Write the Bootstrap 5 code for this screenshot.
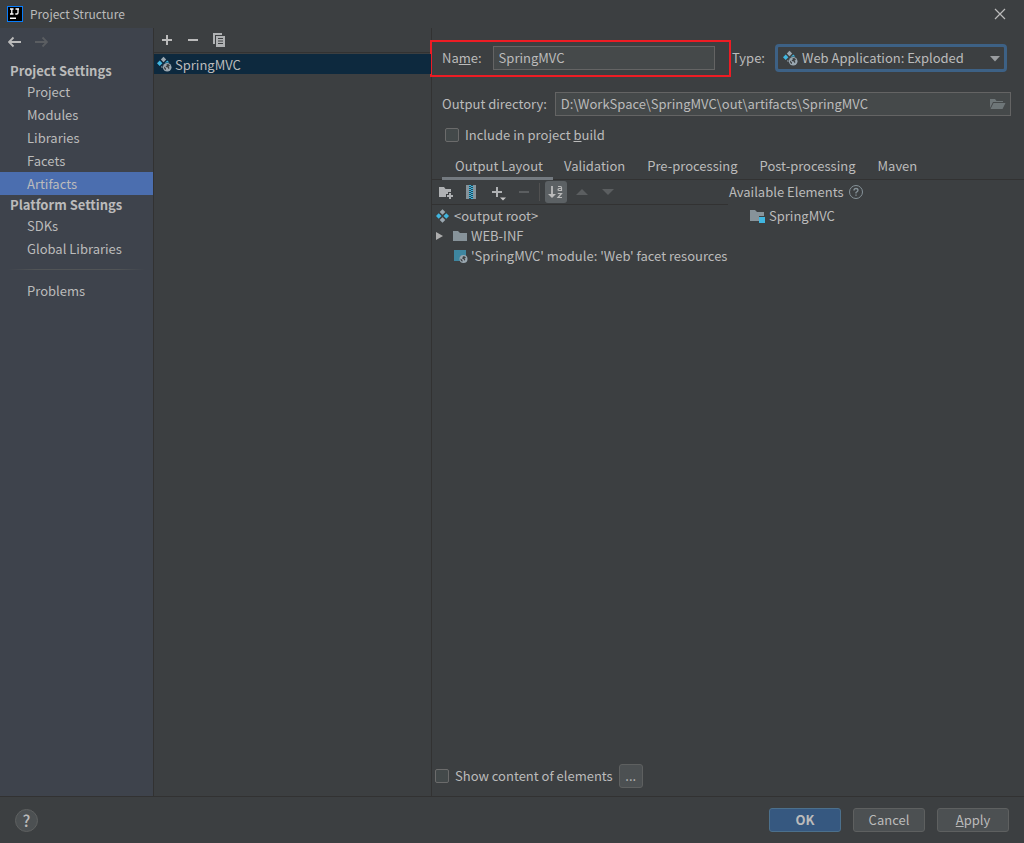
<!DOCTYPE html>
<html lang="en" data-bs-theme="dark">
<head>
<meta charset="utf-8">
<meta name="viewport" content="width=device-width, initial-scale=1">
<title>Project Structure</title>
<link href="https://cdn.jsdelivr.net/npm/bootstrap@5.3.0/dist/css/bootstrap.min.css" rel="stylesheet">
<style>
  :root { --panel: #3c3f41; --side: #3e434c; --line: #323232; --ink: #bbbbbb; --field: #45494a; --edge: #646464; }
  body { background: var(--panel); color: var(--ink); font-family: "Noto Sans CJK SC", sans-serif; font-size: 13px; line-height: 20px; }
  svg { display: block; flex: none; }
  button.plain { background: none; border: 0; padding: 0; color: inherit; display: flex; align-items: center; justify-content: center; }
  .fill { min-width: 0; min-height: 0; }
  .titlebar { height: 28px; padding: 0 16px 0 7px; font-size: 12px; gap: 7px; }
  .sidebar { width: 154px; background: var(--side); border-right: 1px solid var(--line); }
  .history { height: 28px; padding-left: 8px; gap: 14px; }
  .sidebar h2 { font-size: 13px; font-weight: 700; line-height: 19px; margin: 0; padding-left: 10px; color: var(--ink); }
  .sidebar h2:first-of-type { margin-top: 5px; }
  .sidebar .nav-link { color: var(--ink); padding: 0 0 0 27px; line-height: 23px; border-radius: 0; }
  .sidebar .nav-link.active { background: #4b6eaf; }
  .sidebar hr { margin: 9px 8px; border: 0; height: 1px; opacity: 1; background: linear-gradient(90deg, transparent, #515456 20%, #515456 80%, transparent); }
  .artifacts { width: 278px; border-right: 1px solid var(--line); }
  .list-tools { height: 25px; padding-left: 7px; gap: 14px; border-bottom: 1px solid var(--line); margin-bottom: 1px; }
  .list-tools .tool { width: 12px; }
  .artifact { background: #0d293e; color: var(--ink); border: 0; border-radius: 0; padding: 0 2px; gap: 3px; height: 20px; line-height: 19px; }
  .name-group { outline: 2px solid #ed1c24; padding: 4px 14px 5px 10px; margin-top: 14px; gap: 11px; }
  .field { background: var(--field); border: 1px solid var(--edge); color: var(--ink); height: 24px; padding: 0 5px 1px; border-radius: 0; font-size: 13px; line-height: 20px; min-width: 0; }
  .type-group { width: 295px; padding: 0 1px 0 3px; margin-top: 13px; gap: 10px; }
  .type-select { appearance: none; height: 28px; width: 100%; background: var(--panel); color: var(--ink); border: 3px solid #3d6185; border-radius: 4px; padding: 0 24px 0 24px; line-height: 20px; }
  .type-select + svg { position: absolute; left: 7px; top: 6px; pointer-events: none; }
  .type-arrow { position: absolute; right: 7px; top: 12px; pointer-events: none; }
  .outdir { padding: 0 13px 0 10px; margin-top: 17px; gap: 8px; }
  .tick { appearance: none; width: 14px; height: 14px; margin: 0; border: 1px solid #6b6b6b; border-radius: 2px; background: #43494a; flex: none; }
  .include { padding-left: 13px; margin-top: 9px; gap: 6px; }
  .tabs { padding-left: 10px; margin-top: 7px; height: 28px; border-bottom: 1px solid var(--line); }
  .tabs .nav-link { color: var(--ink); padding: 0 11px; line-height: 27px; height: 28px; border: 0; border-radius: 0; }
  .tabs .nav-link.active { background: none; box-shadow: inset 0 -3px #747a80; padding: 0 10px 0 13px; }
  .layout-pane { width: 296px; }
  .tree-tools { height: 25px; padding-left: 6px; border-bottom: 1px solid var(--line); }
  .tree-tools .tool { width: 16px; height: 22px; margin-right: 10px; }
  .tree-tools .tool.last { margin-right: 7px; color: #5b5e60; }
  .tree-tools .sort { width: 22px; height: 22px; background: #5c6164; border-radius: 3px; margin: 0 7px 0 5px; }
  .rule { width: 1px; height: 18px; background: #515151; }
  .tree { padding-top: 1px; }
  .tree-row { height: 20px; }
  .tree-row svg { margin-right: 3px; }
  .tree-row .twisty { margin-right: 0; }
  .available { height: 24px; padding-left: 1px; margin-bottom: 2px; }
  .bottom-bar { padding: 0 3px 8px; gap: 6px; }
  .push { background: #4c5052; border: 1px solid #5e6060; border-radius: 3px; color: var(--ink); height: 24px; width: 72px; padding: 0; font-size: 13px; line-height: 20px; }
  .push:hover { color: var(--ink); border-color: #6e7070; background: #505456; }
  .push.main { background: #365880; border-color: #4c708c; font-weight: 700; }
  .push.dots { width: 24px; }
  .footer-bar { border-top: 1px solid var(--line); padding: 11px 15px 11px; gap: 12px; }
  .push.round { width: 23px; border-radius: 50%; height: 23px; font-size: 16px; font-weight: 500; }
</style>
</head>
<body>
<svg width="0" height="0" class="position-absolute" aria-hidden="true">
  <symbol id="i-exploded" viewBox="0 0 16 16">
    <path fill="#9aa7b0" d="M7.500.8 10.200 3.500 7.500 6.200 4.800 3.500z"/>
    <path fill="#40b6e0" d="M3.700 4.600 6.400 7.300 3.700 10 1 7.300zM11.300 4.600l2 2c-2.500-.5-4.300.3-5 1z"/>
    <path fill="#9aa7b0" d="M6.300 9.500 5 10.900l1.400 1.400z"/>
    <circle cx="11.200" cy="11.200" r="4.300" fill="#9aa7b0"/>
    <path fill="#3c3f41" d="M8 10.500l2 2v1.500C8.500 13.500 7.700 12 8 10.500zM10.500 8l2.500.3 1 1.700-1.500.5 1 1.500-.8 1.200-1-1.700-2-.5.300-1.200 1-.3z"/>
  </symbol>
  <symbol id="i-plus" viewBox="0 0 16 16"><path d="M7 3h2v4h4v2H9v4H7V9H3V7h4z" fill="currentColor"/></symbol>
  <symbol id="i-minus" viewBox="0 0 16 16"><path d="M3 7h10v2H3z" fill="currentColor"/></symbol>
</svg>
<div class="vh-100 d-flex flex-column">
  <header class="titlebar d-flex align-items-center">
    <svg width="16" height="16" viewBox="0 0 16 16"><rect x=".5" y=".5" width="15" height="15" fill="#000" stroke="#087cfa"/><path d="M3 3h3.500M4.800 3v5M3 8h3.500M8.500 3H12M11 3v3.800Q11 8 9.700 8H8.300" fill="none" stroke="#fff" stroke-width="1.300"/><path d="M3 11.500h6V13H3z" fill="#fff"/></svg>
    <span class="me-auto">Project Structure</span>
    <button class="plain" aria-label="Close"><svg width="16" height="16" viewBox="0 0 16 16"><path d="M3 3l10 10M13 3 3 13" stroke="#bbb" stroke-width="1.200"/></svg></button>
  </header>

  <div class="d-flex flex-grow-1 fill">
    <nav class="sidebar flex-shrink-0">
      <div class="history d-flex align-items-center">
        <button class="plain" aria-label="Back"><svg width="13" height="12" viewBox="0 0 13 12"><path d="M13 6H1.500M5.500 1.500 1 6l4.500 4.500" fill="none" stroke="#bbb" stroke-width="1.800"/></svg></button>
        <button class="plain" aria-label="Forward"><svg width="13" height="12" viewBox="0 0 13 12"><path d="M0 6h11.500M7.500 1.500 12 6l-4.500 4.500" fill="none" stroke="#5a5d61" stroke-width="1.800"/></svg></button>
      </div>
      <h2>Project Settings</h2>
      <div class="nav flex-column">
        <a class="nav-link" href="#">Project</a>
        <a class="nav-link" href="#">Modules</a>
        <a class="nav-link" href="#">Libraries</a>
        <a class="nav-link" href="#">Facets</a>
        <a class="nav-link active" href="#">Artifacts</a>
      </div>
      <h2>Platform Settings</h2>
      <div class="nav flex-column">
        <a class="nav-link" href="#">SDKs</a>
        <a class="nav-link" href="#">Global Libraries</a>
      </div>
      <hr>
      <div class="nav flex-column"><a class="nav-link" href="#">Problems</a></div>
    </nav>

    <section class="artifacts flex-shrink-0">
      <div class="list-tools d-flex align-items-center">
        <button class="plain tool" aria-label="Add"><svg width="16" height="16"><use href="#i-plus"/></svg></button>
        <button class="plain tool" aria-label="Remove"><svg width="16" height="16"><use href="#i-minus"/></svg></button>
        <button class="plain tool" aria-label="Copy"><svg width="14" height="14" viewBox="0 0 14 14"><path d="M1 0h9v2H3v9H1z" fill="#afb1b3"/><path fill="#afb1b3" fill-rule="evenodd" d="M4 3h9v11H4zM6 5v1h5V5zM6 7.500v1h5v-1zM6 10v1h5v-1z"/></svg></button>
      </div>
      <div class="list-group list-group-flush">
        <a href="#" class="list-group-item artifact d-flex align-items-center"><svg width="16" height="16"><use href="#i-exploded"/></svg><span>SpringMVC</span></a>
      </div>
    </section>

    <main class="flex-grow-1 d-flex flex-column fill">
      <div class="d-flex align-items-center">
        <div class="name-group d-flex align-items-center flex-grow-1">
          <label for="name">Na<u>m</u>e:</label>
          <input id="name" class="field flex-grow-1" type="text" value="SpringMVC">
        </div>
        <div class="type-group d-flex align-items-center flex-shrink-0">
          <label for="type">Type:</label>
          <div class="position-relative flex-grow-1 me-3">
            <select id="type" class="type-select"><option>Web Application: Exploded</option></select>
            <svg width="16" height="16"><use href="#i-exploded"/></svg>
            <svg class="type-arrow" width="10" height="6" viewBox="0 0 10 6"><path d="M0 0h10L5 5.500z" fill="#9a9da0"/></svg>
          </div>
        </div>
      </div>
      <div class="outdir d-flex align-items-center">
        <label for="outdir">Output directory:</label>
        <div class="position-relative flex-grow-1 d-flex">
          <input id="outdir" class="field w-100" type="text" value="D:\WorkSpace\SpringMVC\out\artifacts\SpringMVC">
          <button class="plain position-absolute end-0 h-100 me-1" aria-label="Browse"><svg width="18" height="14" viewBox="0 0 18 14"><path fill="#6e7678" d="M1 2h5l1.500 2H14v1H4L1 11zM4.500 6H16.500L13.500 12H1.500z"/></svg></button>
        </div>
      </div>
      <div class="include d-flex align-items-center">
        <input id="include" class="tick" type="checkbox"><label for="include">Include in project <u>b</u>uild</label>
      </div>
      <ul class="nav tabs flex-nowrap text-nowrap">
        <li><a class="nav-link active" href="#">Output Layout</a></li>
        <li><a class="nav-link" href="#">Validation</a></li>
        <li><a class="nav-link" href="#">Pre-processing</a></li>
        <li><a class="nav-link" href="#">Post-processing</a></li>
        <li><a class="nav-link" href="#">Maven</a></li>
      </ul>
      <div class="d-flex flex-grow-1">
        <div class="layout-pane flex-shrink-0">
          <div class="tree-tools d-flex align-items-center">
            <button class="plain tool" aria-label="New folder"><svg width="16" height="16" viewBox="0 0 16 16"><path fill="#afb1b3" d="M1 3h5l1.500 2H13v3h-3v2H8v3H1z"/><path fill="#afb1b3" d="M11 9h2v2h2v2h-2v2h-2v-2H9v-2h2z"/></svg></button>
            <button class="plain tool" aria-label="New archive"><svg width="16" height="16" viewBox="0 0 16 16"><path d="M2 1h10v14H2z" fill="#87939a"/><path d="M5 1h4v14H5z" fill="#254a5a"/><path d="M6 1v14" stroke="#40b6e0" stroke-width="2" stroke-dasharray="1 1"/><path d="M8 2v13" stroke="#40b6e0" stroke-width="2" stroke-dasharray="1 1"/></svg></button>
            <button class="plain tool" aria-label="Add copy of"><svg width="18" height="18" viewBox="0 0 18 18"><path d="M8 4v10M3 9h10" stroke="#afb1b3" stroke-width="2"/><path d="M11 14.500h6l-3 3z" fill="#c8c8c8"/></svg></button>
            <button class="plain tool last" aria-label="Remove element"><svg width="16" height="16"><use href="#i-minus"/></svg></button>
            <span class="rule"></span>
            <button class="plain sort" aria-label="Sort elements"><svg width="16" height="16" viewBox="0 0 16 16"><path d="M4 2v9" stroke="#bbb" stroke-width="1.800"/><path d="M0 10h8l-4 4z" fill="#bbb"/><path d="M10 2.500h2.500Q13.500 2.500 13.500 3.500V7M13.500 4.500h-2.300q-1.200 0-1.200 1t1.200 1h2.300M9.800 9.500h3.700l-3.500 4h4" fill="none" stroke="#bbb" stroke-width="1.200"/></svg></button>
            <button class="plain tool" aria-label="Move up"><svg width="12" height="6" viewBox="0 0 12 6"><path d="M6 0l6 6H0z" fill="#5b5e60"/></svg></button>
            <button class="plain tool" aria-label="Move down"><svg width="12" height="6" viewBox="0 0 12 6"><path d="M6 6l6-6H0z" fill="#5b5e60"/></svg></button>
          </div>
          <div class="tree text-nowrap" role="tree">
            <div class="tree-row d-flex align-items-center ps-1" role="treeitem"><svg width="14" height="14" viewBox="0 0 14 14" class="me-1"><path fill="#9aa7b0" d="M6.500.2 9.300 3 6.500 5.800 3.700 3zM6.500 8.200 9.300 11 6.500 13.800 3.700 11z"/><path fill="#40b6e0" d="M2.700 4.200 5.500 7 2.700 9.800 0 7zM10.300 4.200 13 7 10.300 9.800 7.500 7z"/></svg>&lt;output root&gt;</div>
            <div class="tree-row d-flex align-items-center ps-1" role="treeitem"><svg class="twisty" width="16" height="12" viewBox="0 0 16 12"><path d="M-1 1.500 7 6 -1 10.500z" fill="#adadad"/></svg><svg width="16" height="16" viewBox="0 0 16 16"><path d="M1 3h5l2 2h7v8H1z" fill="#87939a"/></svg>WEB-INF</div>
            <div class="tree-row d-flex align-items-center ps-1" role="treeitem"><svg width="16" height="16" viewBox="0 0 16 16" class="ms-3"><path d="M2 2h12v6H8v5H2z" fill="#3e86a0"/><circle cx="11.500" cy="11" r="4" fill="#9aa7b0"/><path fill="#3c3f41" d="M8.500 10.500l2 1.500v1.700C9 13.300 8.300 12 8.500 10.500zM11 8.200l2 .3 1 1.500-1.500.3.800 1.500-.8 1-.8-1.500-1.500-.6.300-1z"/></svg>'SpringMVC' module: 'Web' facet resources</div>
          </div>
        </div>
        <div class="flex-grow-1 fill">
          <div class="available d-flex align-items-center">Available Elements<button class="plain ms-1" aria-label="About available elements"><svg width="16" height="16" viewBox="0 0 16 16"><circle cx="8" cy="8" r="6.500" fill="none" stroke="#87939a"/><path d="M6 6.500Q6 4.500 8 4.500t2 1.800Q10 7.300 8 8.500v1M8 10.500v1.300" fill="none" stroke="#87939a" stroke-width="1.300"/></svg></button></div>
          <div class="tree-row d-flex align-items-center ps-3 ms-1"><svg width="18" height="16" viewBox="0 0 18 16"><path d="M2 2h5l2 2h7v4h-5v5H2z" fill="#87939a"/><path d="M11 9h6v6h-6z" fill="#40b6e0"/></svg>SpringMVC</div>
        </div>
      </div>
      <div class="bottom-bar d-flex align-items-center">
        <input id="show" class="tick" type="checkbox"><label for="show">Show content of elements</label>
        <button class="btn push dots">...</button>
      </div>
    </main>
  </div>

  <footer class="footer-bar d-flex align-items-center">
    <button class="btn push round me-auto" aria-label="Help">?</button>
    <button class="btn push main">OK</button>
    <button class="btn push">Cancel</button>
    <button class="btn push"><u>A</u>pply</button>
  </footer>
</div>
<script src="https://cdn.jsdelivr.net/npm/bootstrap@5.3.0/dist/js/bootstrap.bundle.min.js"></script>
</body>
</html>
